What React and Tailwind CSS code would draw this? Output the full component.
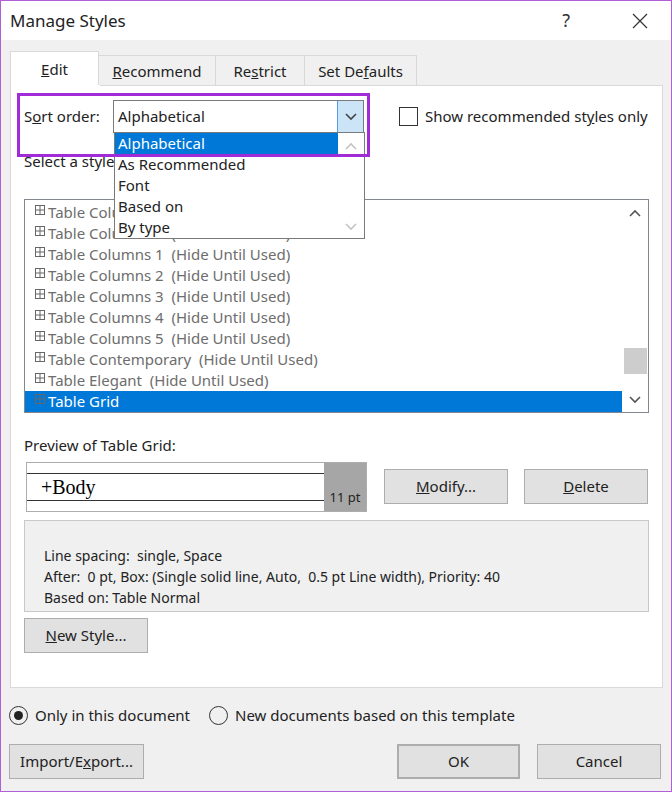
import React from "react";

const F = { fontFamily: '"Noto Sans", "Open Sans", sans-serif' };

function Chev({ up, className = "" }) {
  return (
    <svg width="12" height="8" viewBox="0 0 12 8" className={className}>
      <path d={up ? "M1 7 L6 2 L11 7" : "M1 1 L6 6 L11 1"} fill="none" stroke="currentColor" strokeWidth="1.6" />
    </svg>
  );
}

function Grid() {
  return (
    <svg width="10" height="10" viewBox="0 0 10 10" className="mr-[3px] -mt-[4px] shrink-0">
      <rect x="0.5" y="0.5" width="9" height="9" fill="none" stroke="#666" />
      <path d="M5 0 V10 M0 5 H10" stroke="#666" />
    </svg>
  );
}

const rows = [
  "Table Columns 1",
  "Table Columns 1",
  "Table Columns 1",
  "Table Columns 2",
  "Table Columns 3",
  "Table Columns 4",
  "Table Columns 5",
  "Table Contemporary",
  "Table Elegant",
];

function Btn({ children, className = "" }) {
  return (
    <div className={"h-[35px] flex items-center justify-center bg-[#e1e1e1] border border-[#adadad] text-[15px] text-[#222] " + className}>
      {children}
    </div>
  );
}

export default function App() {
  return (
    <div style={F} className="relative w-[672px] h-[792px] bg-[#f0f0f0] border border-[#b05fd6] text-[#222] overflow-hidden">
      <div className="h-[39px] bg-white flex items-center pl-[9px] text-[17px]">
        <span>Manage Styles</span>
        <span className="ml-auto mr-[62px] text-[18px] text-[#333]">?</span>
        <svg width="16" height="16" viewBox="0 0 16 16" className="mr-[23px]">
          <path d="M1 1 L15 15 M15 1 L1 15" stroke="#333" strokeWidth="1.2" />
        </svg>
      </div>
      <div className="pl-[9px] pt-[11px]">
        <div className="flex items-end h-[35px] text-[15px]">
          <div className="w-[89px] h-[35px] bg-white border border-b-0 border-[#d9d9d9] flex items-center justify-center"><span><u>E</u>dit</span></div>
          <div className="w-[117px] h-[31px] border border-l-0 border-b-0 border-[#d9d9d9] flex items-center justify-center"><span><u>R</u>ecommend</span></div>
          <div className="w-[89px] h-[31px] border border-l-0 border-b-0 border-[#d9d9d9] flex items-center justify-center"><span>Re<u>s</u>trict</span></div>
          <div className="w-[112px] h-[31px] border border-l-0 border-b-0 border-[#d9d9d9] flex items-center justify-center"><span>Set De<u>f</u>aults</span></div>
        </div>
        <div className="w-[653px] h-[603px] bg-white border border-[#d9d9d9] border-t-0 -mt-px relative">
          <div className="border-t border-[#d9d9d9] ml-[89px]" />
          <div className="pl-[13px] pt-[14px] pr-[14px]">
            <div className="flex items-center h-[33px] text-[15px]">
              <span className="w-[89px]">S<u>o</u>rt order:</span>
              <div className="w-[251px] h-[33px] border border-[#7a7a7a] flex items-center">
                <span className="pl-[4px]">Alphabetical</span>
                <div className="ml-auto w-[26px] h-full bg-[#cce4f7] border-l border-[#569de5] flex items-center justify-center text-[#444]"><Chev /></div>
              </div>
              <div className="ml-[35px] w-[19px] h-[19px] border border-[#333]" />
              <span className="ml-[7px]">Show recommended st<u>y</u>les only</span>
            </div>
            <div className="mt-[17px] text-[15px]">Select a style to edit</div>
            <div className="mt-[26px] w-[625px] h-[214px] border border-[#828790] flex">
              <div className="flex-1 pt-[2px]">
                {rows.map((n, i) => (
                  <div key={i} className="h-[21px] flex items-center pl-[10px] text-[15px] text-[#6d6d6d]">
                    <Grid />{n}&nbsp;&nbsp;(Hide Until Used)
                  </div>
                ))}
                <div className="h-[21px] flex items-center pl-[10px] text-[15px] text-white bg-[#0078d7]">
                  <Grid />Table Grid
                </div>
              </div>
              <div className="w-[26px] flex flex-col items-center text-[#555]">
                <Chev up className="mt-[9px]" />
                <div className="mt-auto mb-[22px] w-[23px] h-[26px] bg-[#cdcdcd]" />
                <Chev className="mb-[8px]" />
              </div>
            </div>
            <div className="mt-[21px] text-[15px]">Preview of Table Grid:</div>
            <div className="mt-[6px] flex items-start">
              <div className="ml-[2px] w-[341px] h-[50px] border border-[#adadad] flex">
                <div className="flex-1 pt-[10px]">
                  <div className="border-t border-[#333]" />
                  <div className="h-[26px] pl-[14px] flex items-center text-[20px] text-black" style={{ fontFamily: '"Liberation Serif", serif' }}>+Body</div>
                  <div className="border-t border-[#333]" />
                </div>
                <div className="w-[42px] bg-[#a6a6a6] flex items-end justify-center pb-[4px] text-[13px]">11 pt</div>
              </div>
              <Btn className="ml-[17px] mt-[7px] w-[124px]"><span><u>M</u>odify...</span></Btn>
              <Btn className="ml-[16px] mt-[7px] w-[124px]"><span><u>D</u>elete</span></Btn>
            </div>
            <div className="mt-[8px] w-[625px] h-[92px] bg-[#f0f0f0] border border-[#c8c8c8] pl-[19px] pt-[24px] text-[14px] leading-[21px]">
              <div>Line spacing:&nbsp; single, Space</div>
              <div>After:&nbsp; 0 pt, Box: (Single solid line, Auto,&nbsp; 0.5 pt Line width), Priority: 40</div>
              <div>Based on: Table Normal</div>
            </div>
            <Btn className="mt-[6px] w-[124px]"><span><u>N</u>ew Style...</span></Btn>
          </div>

          <div className="absolute left-[103px] top-[47px] w-[251px] h-[107px] bg-white border border-[#7a7a7a] flex text-[15px]">
            <div className="flex-1">
              <div className="h-[21px] bg-[#0078d7] text-white pl-[3px] flex items-center">Alphabetical</div>
              {["As Recommended", "Font", "Based on", "By type"].map((t) => (
                <div key={t} className="h-[21px] pl-[3px] flex items-center">{t}</div>
              ))}
            </div>
            <div className="w-[26px] flex flex-col items-center text-[#c4c4c4]">
              <Chev up className="mt-[9px]" />
              <Chev className="mt-auto mb-[7px]" />
            </div>
          </div>
          <div className="absolute left-[6px] top-[8px] w-[353px] h-[64px] border-[3px] border-[#a22bd8]" />
        </div>
        <div className="flex items-center mt-[16px] text-[15px] -ml-[1px]">
          <div className="w-[19px] h-[19px] rounded-full border border-[#333] flex items-center justify-center"><div className="w-[9px] h-[9px] rounded-full bg-[#222]" /></div>
          <span className="ml-[7px]">Only in this document</span>
          <div className="ml-[19px] w-[19px] h-[19px] rounded-full border border-[#333]" />
          <span className="ml-[7px]">New documents based on this template</span>
        </div>
        <div className="flex mt-[17px] -ml-[1px]">
          <Btn className="w-[135px]"><span>Import/E<u>x</u>port...</span></Btn>
          <Btn className="ml-auto w-[123px] border-2 border-[#0078d7]">OK</Btn>
          <Btn className="ml-[17px] mr-[10px] w-[124px]">Cancel</Btn>
        </div>
      </div>
    </div>
  );
}
